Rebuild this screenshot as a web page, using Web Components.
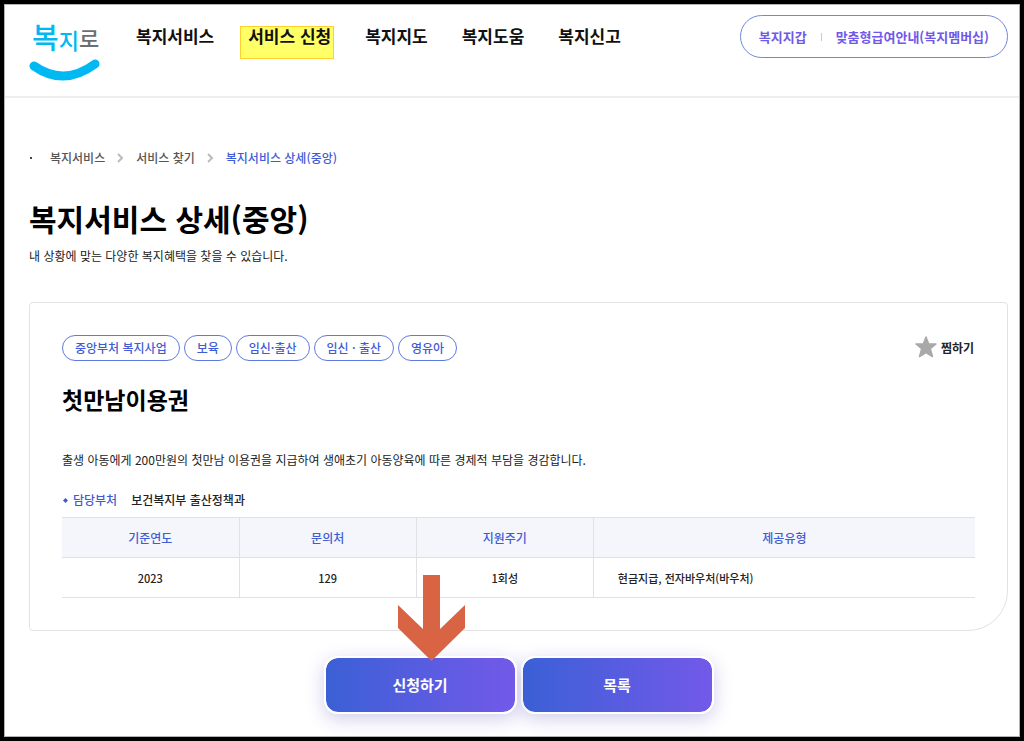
<!DOCTYPE html>
<html lang="ko">
<head>
<meta charset="utf-8">
<meta name="viewport" content="width=device-width, initial-scale=1">
<title>복지서비스 상세(중앙)</title>
<style>
  html, body { margin: 0; }
  body { font-family: "Noto Sans CJK KR", "Noto Sans", sans-serif; font-size: 12px; line-height: 20px; color: #222; background: #fff; }
</style>
</head>
<body>
<bok-page></bok-page>

<template id="t-page">
  <style>
    :host { display: block; box-sizing: border-box; min-height: 100vh; border: 4px solid #000; background: #fff; }
    .inner { border: 1px solid #b4b4b4; box-sizing: border-box; min-height: calc(100vh - 8px); }
    main { padding: 50px 11px 20px 24px; }
    h1 { margin: 28px 0 0; font-size: 30px; line-height: 44px; font-weight: 700; color: #000; }
    .lead { margin: 6px 0 0; }
    bok-service { margin-top: 36px; }
    bok-actions { margin-top: 25px; }
  </style>
  <div class="inner">
    <bok-header></bok-header>
    <main>
      <bok-crumbs></bok-crumbs>
      <h1>복지서비스 상세(중앙)</h1>
      <p class="lead">내 상황에 맞는 다양한 복지혜택을 찾을 수 있습니다.</p>
      <bok-service>
        <bok-tag slot="tags">중앙부처 복지사업</bok-tag>
        <bok-tag slot="tags">보육</bok-tag>
        <bok-tag slot="tags">임신·출산</bok-tag>
        <bok-tag slot="tags">임신 · 출산</bok-tag>
        <bok-tag slot="tags">영유아</bok-tag>
        <span slot="title">첫만남이용권</span>
        <span slot="summary">출생 아동에게 200만원의 첫만남 이용권을 지급하여 생애초기 아동양육에 따른 경제적 부담을 경감합니다.</span>
        <span slot="dept">보건복지부 출산정책과</span>
        <bok-facts></bok-facts>
      </bok-service>
      <bok-actions></bok-actions>
    </main>
  </div>
</template>

<template id="t-header">
  <style>
    :host { display: block; border-bottom: 2px solid #eee; }
    header { display: flex; align-items: flex-start; padding: 10px 11px 0 24px; height: 81px; }
    .logo { display: block; width: 72px; height: 68px; }
    .logo svg { display: block; }
    nav { display: flex; gap: 34px; margin: 8px 0 0 35px; }
    nav a { position: relative; z-index: 0; font-size: 17px; line-height: 26px; font-weight: 700; color: #111; text-decoration: none; white-space: nowrap; }
    nav a.marked::before { content: ""; position: absolute; z-index: -1; inset: 3px -3px -10px -8px; background: #ffff66; border: 1px solid #ffd02e; }
    .quick { display: flex; align-items: center; gap: 14px; box-sizing: border-box; height: 43px; margin-left: auto; padding: 0 18px; border: 1px solid #6f87dd; border-radius: 22px; }
    .quick a { font-size: 13px; font-weight: 700; color: #7059e8; text-decoration: none; white-space: nowrap; }
    .quick i { width: 1px; height: 8px; background: #c9c2f3; }
  </style>
  <header>
    <a class="logo" href="#" aria-label="복지로">
      <svg width="72" height="68" viewBox="0 0 72 68" font-family="Noto Sans CJK KR" font-weight="500">
        <text x="3" y="34"><tspan font-size="29" fill="#00b9f2">복</tspan><tspan font-size="22" fill="#00b9f2">지</tspan><tspan dy="-2" font-size="22" fill="#6d6e71">로</tspan></text>
        <path d="M5 51 Q35 72 66 49" fill="none" stroke="#00b9f2" stroke-width="9" stroke-linecap="round"/>
      </svg>
    </a>
    <nav aria-label="주 메뉴">
      <a href="#">복지서비스</a>
      <a href="#" class="marked">서비스 신청</a>
      <a href="#">복지지도</a>
      <a href="#">복지도움</a>
      <a href="#">복지신고</a>
    </nav>
    <div class="quick"><a href="#">복지지갑</a><i></i><a href="#">맞춤형급여안내(복지멤버십)</a></div>
  </header>
</template>

<template id="t-crumbs">
  <style>
    :host { display: block; }
    ol { display: flex; align-items: center; gap: 12px; margin: 0; padding: 0; list-style: none; }
    li { display: flex; align-items: center; gap: 12px; }
    .dot { width: 2px; height: 2px; margin: 0 6px 0 1px; background: #444; }
    a { color: #555; font-weight: 500; text-decoration: none; }
    a[aria-current] { color: #3f5bd6; }
    svg { display: block; }
  </style>
  <nav aria-label="현재 위치">
    <ol>
      <li><span class="dot"></span><a href="#">복지서비스</a><svg width="7" height="10" viewBox="0 0 7 10"><path d="M1 1l4 4-4 4" fill="none" stroke="#bbb" stroke-width="2"/></svg></li>
      <li><a href="#">서비스 찾기</a><svg width="7" height="10" viewBox="0 0 7 10"><path d="M1 1l4 4-4 4" fill="none" stroke="#bbb" stroke-width="2"/></svg></li>
      <li><a href="#" aria-current="page">복지서비스 상세(중앙)</a></li>
    </ol>
  </nav>
</template>

<template id="t-tag">
  <style>
    :host { display: block; box-sizing: border-box; height: 26px; padding: 0 12px; border: 1px solid #5f7ade; border-radius: 13px; line-height: 24px; font-weight: 500; color: #3f5bd6; white-space: nowrap; }
  </style>
  <slot></slot>
</template>

<template id="t-service">
  <style>
    :host { display: block; border: 1px solid #e2e2e2; border-radius: 4px 4px 40px 4px; padding: 32px; }
    .top { display: flex; align-items: center; justify-content: space-between; }
    .tags { display: flex; flex-wrap: wrap; gap: 4px; }
    button { display: flex; align-items: center; gap: 4px; padding: 0 1px; border: 0; background: none; font: inherit; font-weight: 700; color: #222; cursor: pointer; }
    h2 { margin: 20px 0 0; font-size: 23px; line-height: 36px; font-weight: 700; color: #000; }
    .summary { margin: 33px 0 0; }
    .dept { display: flex; align-items: center; margin: 20px 0 7px; }
    .dept svg { margin: 0 5px 0 1px; }
    .dept b { font-weight: 500; color: #3f5bd6; margin-right: 14px; }
    .dept span { font-weight: 500; }
  </style>
  <div class="top">
    <div class="tags"><slot name="tags"></slot></div>
    <button type="button"><svg width="22" height="24" viewBox="0 0 22 24" aria-hidden="true"><path d="M11 1l2.700 7h7.300l-5.700 4.600 2.200 7.900L11 16.500l-6.500 4 2.200-7.900L1 8h7.300z" fill="#a9a9a9" stroke="#a9a9a9" stroke-width="1.500" stroke-linejoin="round"/></svg>찜하기</button>
  </div>
  <h2><slot name="title"></slot></h2>
  <p class="summary"><slot name="summary"></slot></p>
  <div class="dept"><svg width="5" height="5" viewBox="0 0 5 5"><path d="M2.500 0L5 2.500 2.500 5 0 2.500z" fill="#3f5bd6"/></svg><b>담당부처</b><span><slot name="dept"></slot></span></div>
  <slot></slot>
</template>

<template id="t-facts">
  <style>
    :host { display: block; }
    table { width: 100%; table-layout: fixed; border-collapse: collapse; }
    th, td { height: 39px; padding: 0; border: 1px solid #e0e1e5; font-weight: 500; text-align: center; }
    th { background: #f5f6fb; color: #3f5bd6; }
    td { font-size: 11px; }
    tr > :first-child { border-left: 0; }
    tr > :last-child { border-right: 0; }
    td:last-child { padding-left: 24px; text-align: left; }
    col.narrow { width: 19.4%; }
  </style>
  <table>
    <colgroup><col class="narrow"><col class="narrow"><col class="narrow"><col></colgroup>
    <thead><tr><th scope="col">기준연도</th><th scope="col">문의처</th><th scope="col">지원주기</th><th scope="col">제공유형</th></tr></thead>
    <tbody><tr><td>2023</td><td>129</td><td>1회성</td><td>현금지급, 전자바우처(바우처)</td></tr></tbody>
  </table>
</template>

<template id="t-actions">
  <style>
    :host { display: flex; justify-content: center; gap: 4px; }
    .spot { position: relative; }
    button { display: block; box-sizing: border-box; width: 193px; height: 58px; padding: 0; border: 2px solid #fff; border-radius: 14px; background: linear-gradient(90deg, #3b60d6, #7359e9) padding-box; box-shadow: 0 5px 18px rgba(70, 60, 180, .25); font: inherit; font-size: 15px; font-weight: 700; color: #fff; cursor: pointer; }
    .spot svg { position: absolute; left: 74px; bottom: 53px; z-index: 1; pointer-events: none; }
  </style>
  <div class="spot">
    <button type="button">신청하기</button>
    <svg width="67" height="86" viewBox="0 0 67 86" aria-hidden="true"><path d="M25 0h17v54l25-24v23L33.500 86 0 53V30l25 24z" fill="#d96444"/></svg>
  </div>
  <button type="button">목록</button>
</template>

<script>
  class TemplateElement extends HTMLElement {
    constructor() {
      super();
      const template = document.getElementById(this.constructor.template);
      this.attachShadow({ mode: 'open' }).append(template.content.cloneNode(true));
    }
  }
  for (const name of ['tag', 'facts', 'actions', 'crumbs', 'header', 'service', 'page']) {
    customElements.define('bok-' + name, class extends TemplateElement {
      static template = 't-' + name;
    });
  }
</script>
</body>
</html>
